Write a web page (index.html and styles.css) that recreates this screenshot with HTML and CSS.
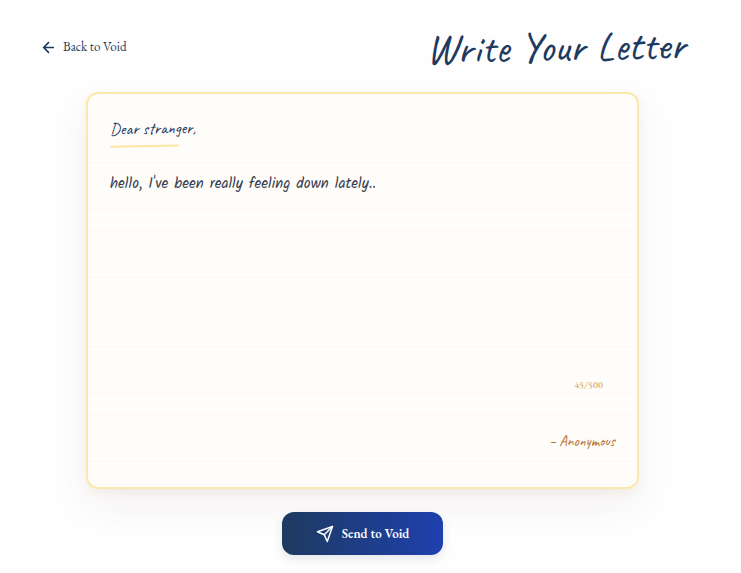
FILE: index.html
```html
<!DOCTYPE html>
<html lang="en">
<head>
  <meta charset="UTF-8" />
  <meta name="viewport" content="width=device-width, initial-scale=1.0"/>
  <title>Write Your Letter</title>
  <link rel="stylesheet" href="styles.css">
</head>
<body>

  <header class="header">
    <a class="back-link" href="#">
      <svg class="back-icon" viewBox="0 0 24 24" aria-hidden="true">
        <path d="M21 12H3M12 3l-9 9 9 9"/>
      </svg>
      Back to Void
    </a>
    <h1 class="title">Write Your Letter</h1>
  </header>

  <form class="letter-form">
    <div class="paper">
      <label class="greeting" for="letter">Dear stranger,</label>
      <textarea class="letter-text" id="letter" maxlength="500" spellcheck="false">hello, I've been really feeling down lately..</textarea>
      <p class="counter">45/500</p>
      <p class="signature">– Anonymous</p>
    </div>

    <button class="send-button" type="submit">
      <svg class="send-icon" viewBox="0 0 24 24" aria-hidden="true">
        <path d="M22 2L2 9l9 4 4 9z"/>
        <path d="M22 2L11 13"/>
      </svg>
      Send to Void
    </button>
  </form>

</body>
</html>
```
FILE: styles.css
```css
* {
  margin: 0;
  padding: 0;
  box-sizing: border-box;
}

body {
  background: #fefefe;
  font-family: "EB Garamond", "Liberation Serif", serif;
  color: #1e3a5f;
  padding: 24px 16px 16px 0;
}

.header {
  display: flex;
  align-items: center;
  justify-content: space-between;
  height: 46px;
  padding: 0 39px 0 42px;
}

.back-link {
  display: flex;
  align-items: center;
  gap: 8px;
  font-size: 13px;
  line-height: 20px;
  color: #1e3a5f;
  text-decoration: none;
}

.back-icon {
  width: 13px;
  height: 13px;
  fill: none;
  stroke: currentColor;
  stroke-width: 3;
  stroke-linecap: round;
  stroke-linejoin: round;
}

.title {
  font-family: Caveat, Lato, cursive;
  font-size: 43px;
  line-height: 48px;
  font-weight: 500;
  color: #1e3a5f;
  transform: rotate(-1deg);
}

.letter-form {
  display: flex;
  flex-direction: column;
  align-items: center;
  gap: 23px;
  padding: 22px 86px 0;
}

.paper {
  display: flex;
  flex-direction: column;
  align-items: flex-start;
  width: 100%;
  padding: 23px 22px 33px;
  border: 2px solid #fbe8ab;
  border-radius: 12px;
  background: repeating-linear-gradient(#fefdf9 0 22px, #faf9f6 22px 23px);
  box-shadow: 0 16px 36px rgba(120, 70, 50, 0.07), 0 3px 8px rgba(180, 130, 60, 0.08);
}

.greeting {
  font-family: Caveat, Lato, cursive;
  font-size: 17px;
  line-height: 24px;
  color: #1e3a5f;
  transform: rotate(-1deg);
}

.greeting::after {
  content: "";
  display: block;
  width: 80%;
  height: 2px;
  margin-top: 4px;
  border-radius: 2px;
  background: #fbe6a2;
}

.letter-text {
  width: 100%;
  height: 204px;
  margin-top: 26px;
  border: none;
  outline: none;
  resize: none;
  background: transparent;
  font-family: Kalam, Lato, cursive;
  font-size: 15px;
  line-height: 23px;
  color: #374151;
}

.counter {
  align-self: flex-end;
  padding: 0 12px;
  font-size: 10px;
  line-height: 16px;
  font-weight: 500;
  color: #d9a95e;
}

.signature {
  align-self: flex-end;
  margin-top: 37px;
  font-family: Caveat, Lato, cursive;
  font-size: 15px;
  line-height: 24px;
  color: #b8733a;
}

.send-button {
  display: flex;
  align-items: center;
  gap: 8px;
  padding: 12px 34px;
  border: none;
  border-radius: 12px;
  background: linear-gradient(to right, #1e3a5f, #1e40af);
  box-shadow: 0 4px 10px rgba(30, 58, 95, 0.12);
  font-family: inherit;
  font-size: 13px;
  line-height: 19px;
  font-weight: 600;
  color: #fff;
  cursor: pointer;
}

.send-icon {
  width: 18px;
  height: 18px;
  fill: none;
  stroke: currentColor;
  stroke-width: 2;
  stroke-linecap: round;
  stroke-linejoin: round;
}
```
